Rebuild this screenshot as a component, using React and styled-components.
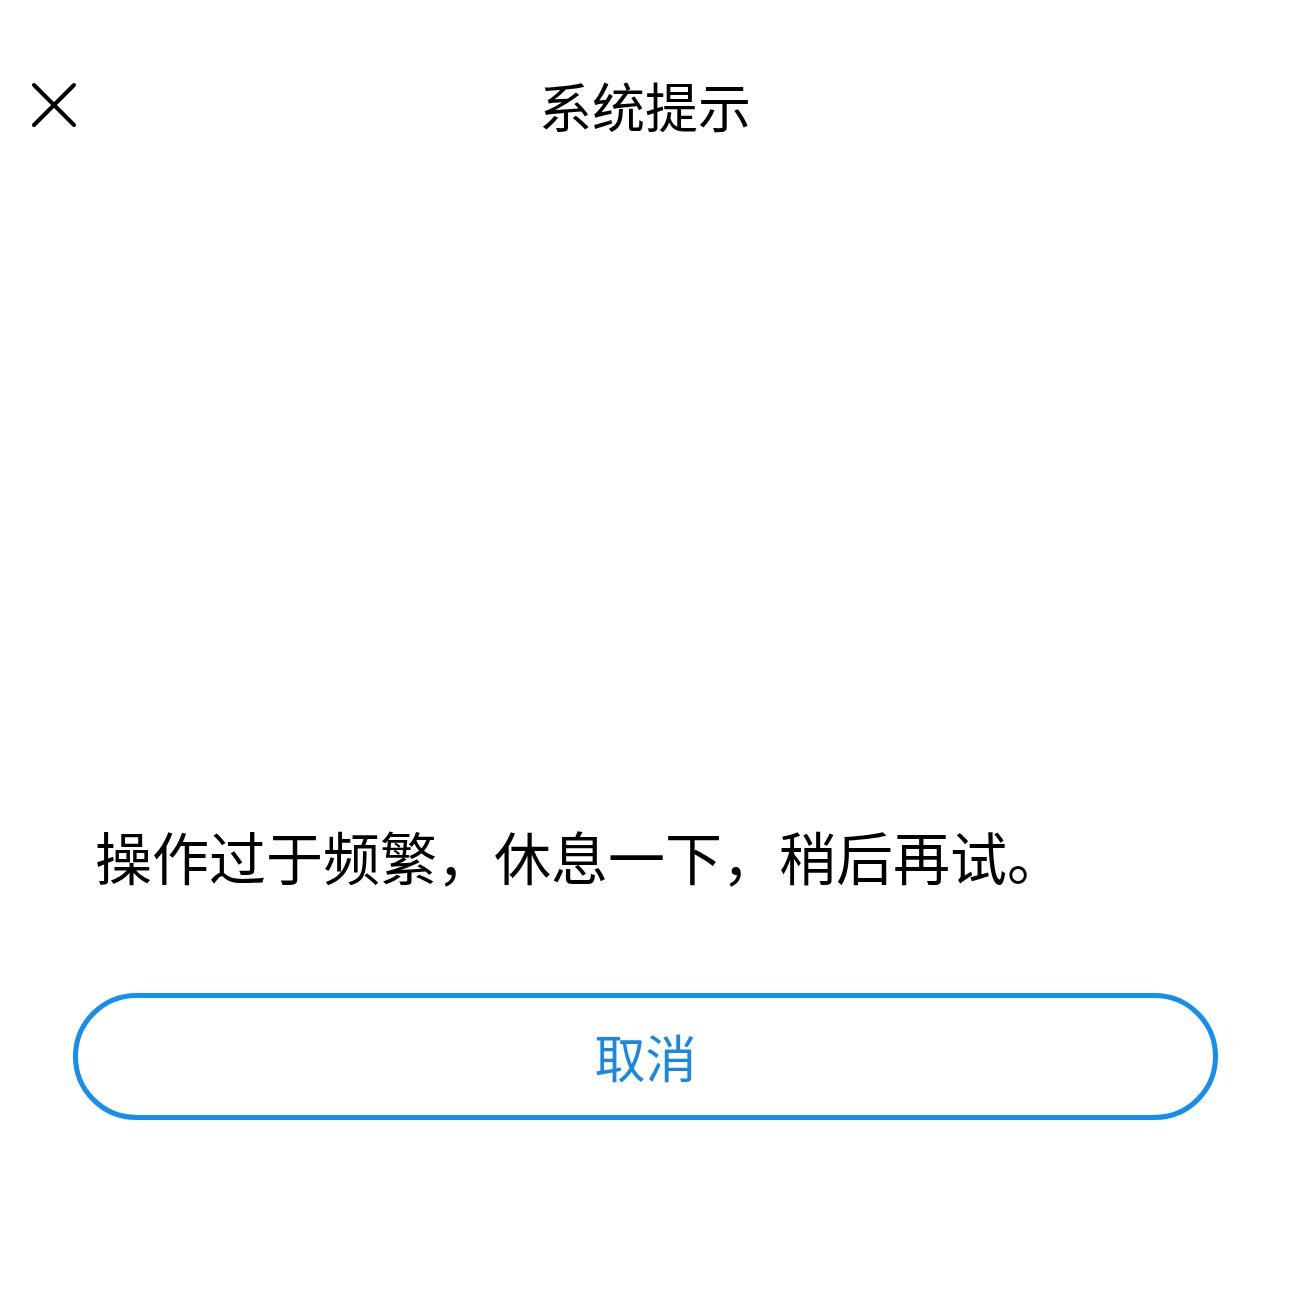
import React from "react";
import styled, { createGlobalStyle } from "styled-components";

const Global = createGlobalStyle`
  html, body { margin: 0; padding: 0; background: #ffffff; }
  body { font-family: "Noto Sans CJK SC", "Noto Sans", sans-serif; }
`;

const Page = styled.div`
  width: 1290px;
  height: 1290px;
  display: flex;
  flex-direction: column;
  background: #fff;
`;

const Header = styled.header`
  height: 210px;
  display: grid;
  grid-template-columns: 160px 1fr 160px;
  align-items: center;
`;

const CloseButton = styled.button`
  border: none;
  background: none;
  padding: 0;
  margin-left: 30px;
  width: 48px;
  height: 48px;
  display: flex;
  align-items: center;
  justify-content: center;
  cursor: pointer;
`;

const Title = styled.h1`
  margin: 0;
  text-align: center;
  font-size: 53px;
  font-weight: 400;
  color: #000;
  line-height: 1;
`;

const Message = styled.p`
  margin: 611px 0 0 95px;
  font-size: 57px;
  line-height: 68px;
  color: #000;
  letter-spacing: 0;
`;

const Actions = styled.div`
  margin-top: 104px;
  padding: 0 72px 0 73px;
`;

const OutlineButton = styled.button`
  width: 100%;
  height: 127px;
  box-sizing: border-box;
  border: 5px solid #148ef2;
  border-radius: 64px;
  background: #fff;
  color: #1a88e2;
  font-family: "Noto Sans CJK SC", sans-serif;
  font-size: 51px;
  line-height: 1;
  cursor: pointer;
`;

export default function App() {
  return (
    <>
      <Global />
      <Page>
        <Header>
          <CloseButton aria-label="关闭">
            <svg width="48" height="48" viewBox="0 0 48 48">
              <path d="M4 4 L44 44 M44 4 L4 44" stroke="#000" strokeWidth="4" strokeLinecap="round" />
            </svg>
          </CloseButton>
          <Title>系统提示</Title>
          <div />
        </Header>
        <Message>操作过于频繁，休息一下，稍后再试。</Message>
        <Actions>
          <OutlineButton>取消</OutlineButton>
        </Actions>
      </Page>
    </>
  );
}
